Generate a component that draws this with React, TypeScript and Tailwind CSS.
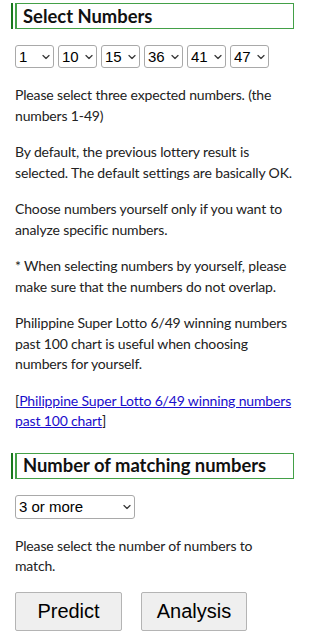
function Chevron() {
  return (
    <svg
      className="pointer-events-none absolute right-[4px] top-1/2 -translate-y-1/2"
      width="8"
      height="5"
      viewBox="0 0 8 5"
      fill="none"
    >
      <path d="M1 1L4 4L7 1" stroke="#3b3b3b" strokeWidth="1.3" strokeLinecap="round" strokeLinejoin="round" />
    </svg>
  );
}

function Select({ value, options, className }: { value: string; options: string[]; className: string }) {
  return (
    <div className={`relative inline-block ${className}`}>
      <select
        defaultValue={value}
        className="h-full w-full appearance-none rounded-[3px] border border-[#a9a9a9] bg-white pl-[3px] text-[15px] leading-none tracking-normal text-black outline-none"
        style={{ fontFamily: "'Liberation Sans', Arial, sans-serif" }}
      >
        {options.map((o) => (
          <option key={o} value={o}>
            {o}
          </option>
        ))}
      </select>
      <Chevron />
    </div>
  );
}

function Heading({ children }: { children: React.ReactNode }) {
  return (
    <div className="border-l-2 border-[#19791d] pl-[2px]">
      <div className="flex h-[26px] items-center border border-l-2 border-[#43a047] pl-[6px]">
        <h2 className="text-[18.4px] font-bold leading-none tracking-normal text-[#111]">{children}</h2>
      </div>
    </div>
  );
}

const nums = Array.from({ length: 49 }, (_, i) => String(i + 1));

export default function App() {
  const picks = ["1", "10", "15", "36", "41", "47"];
  return (
    <div
      className="w-[300px] bg-white pl-[11px] pr-[6px] pt-[3px] pb-[7px] text-[14px] leading-[20.5px] tracking-[-0.15px] text-[#222]"
      style={{ fontFamily: "Lato, 'Noto Sans', sans-serif" }}
    >
      <Heading>Select Numbers</Heading>

      <div className="ml-[4px] mt-[16px] flex gap-[4px]">
        {picks.map((p) => (
          <Select key={p} value={p} options={nums} className="h-[23px] w-[39px]" />
        ))}
      </div>

      <div className="ml-[4px] mr-[1px]">
        <p className="mt-[17px]">Please select three expected numbers. (the numbers 1-49)</p>
        <p className="mt-[16px]">
          By default, the previous lottery result is selected. The default settings are basically OK.
        </p>
        <p className="mt-[16px]">Choose numbers yourself only if you want to analyze specific numbers.</p>
        <p className="mt-[16px]">
          * When selecting numbers by yourself, please make sure that the numbers do not overlap.
        </p>
        <p className="mt-[16px]">
          Philippine Super Lotto 6/49 winning numbers past 100 chart is useful when choosing numbers for yourself.
        </p>
        <p className="mt-[16px]">
          [
          <a href="#" className="text-[#1a0dcc] underline">
            Philippine Super Lotto 6/49 winning numbers past 100 chart
          </a>
          ]
        </p>
      </div>

      <div className="mt-[21px]">
        <Heading>Number of matching numbers</Heading>
      </div>

      <div className="ml-[4px] mt-[16px] flex">
        <Select value="3 or more" options={["3 or more", "4 or more", "5 or more", "6"]} className="h-[24px] w-[120px]" />
      </div>

      <p className="ml-[4px] mt-[17px]">Please select the number of numbers to match.</p>

      <div
        className="ml-[4px] mt-[15px] flex gap-[19px] tracking-normal"
        style={{ fontFamily: "'Liberation Sans', Arial, sans-serif" }}
      >
        <button className="h-[39px] w-[107px] rounded-[2px] border border-[#b4b4b4] bg-[#efefef] text-[20px] text-black">
          Predict
        </button>
        <button className="h-[39px] w-[106px] rounded-[2px] border border-[#b4b4b4] bg-[#efefef] text-[20px] text-black">
          Analysis
        </button>
      </div>
    </div>
  );
}
